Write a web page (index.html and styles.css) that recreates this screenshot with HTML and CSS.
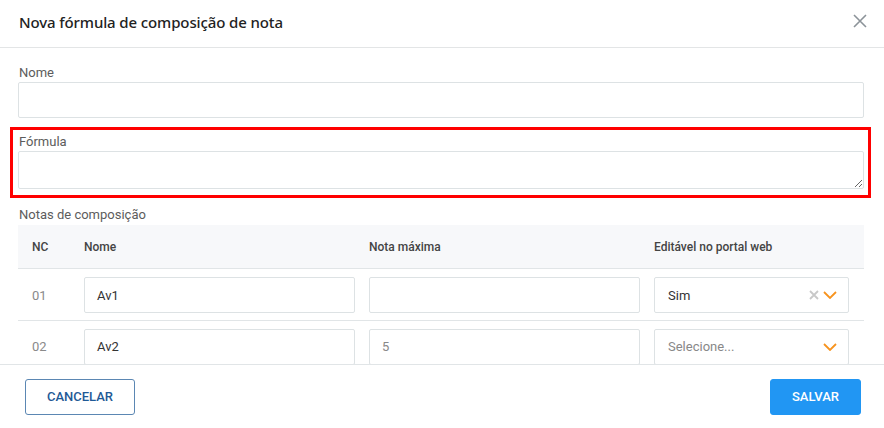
FILE: index.html
```html
<!DOCTYPE html>
<html lang="pt-BR">
<head>
<meta charset="utf-8">
<title>Nova fórmula de composição de nota</title>
<link rel="stylesheet" href="styles.css">
</head>
<body>
<div class="modal">
  <header class="modal-header">
    <h1 class="modal-title">Nova fórmula de composição de nota</h1>
    <button class="close-btn" type="button" aria-label="Fechar">
      <svg viewBox="0 0 14 14" width="14" height="14"><path d="M1 1 L13 13 M13 1 L1 13" stroke="#8c9399" stroke-width="1.6" fill="none"/></svg>
    </button>
  </header>
  <div class="modal-body">
    <div class="field">
      <label class="field-label">Nome</label>
      <input class="text-input" type="text">
    </div>
    <div class="field highlight">
      <label class="field-label">Fórmula</label>
      <textarea class="text-area"></textarea>
    </div>
    <div class="field">
      <label class="field-label">Notas de composição</label>
      <div class="grid-table">
        <div class="grid-row head">
          <div class="cell">NC</div>
          <div class="cell">Nome</div>
          <div class="cell">Nota máxima</div>
          <div class="cell last">Editável no portal web</div>
        </div>
        <div class="grid-row">
          <div class="cell nc">01</div>
          <div class="cell"><div class="box">Av1</div></div>
          <div class="cell"><div class="box"></div></div>
          <div class="cell last">
            <div class="box select">
              <span class="sel-value">Sim</span>
              <svg class="clear-ico" viewBox="0 0 10 10" width="10" height="10"><path d="M1 1 L9 9 M9 1 L1 9" stroke="#c8c8c8" stroke-width="1.8" fill="none"/></svg>
              <svg class="chev" viewBox="0 0 14 8" width="14" height="8"><path d="M1 1 L7 7 L13 1" stroke="#f7931e" stroke-width="1.8" fill="none"/></svg>
            </div>
          </div>
        </div>
        <div class="grid-row">
          <div class="cell nc">02</div>
          <div class="cell"><div class="box">Av2</div></div>
          <div class="cell"><div class="box muted">5</div></div>
          <div class="cell last">
            <div class="box select">
              <span class="sel-value muted">Selecione...</span>
              <svg class="chev" viewBox="0 0 14 8" width="14" height="8"><path d="M1 1 L7 7 L13 1" stroke="#f7931e" stroke-width="1.8" fill="none"/></svg>
            </div>
          </div>
        </div>
      </div>
    </div>
  </div>
  <footer class="modal-footer">
    <button class="btn btn-outline" type="button">CANCELAR</button>
    <button class="btn btn-primary" type="button">SALVAR</button>
  </footer>
</div>
</body>
</html>
```
FILE: styles.css
```css
* { box-sizing: border-box; }
html, body { margin: 0; padding: 0; background: #fff; }
body { font-family: Roboto, "Liberation Sans", sans-serif; color: #333; }

.modal { width: 884px; height: 428px; display: flex; flex-direction: column; overflow: hidden; }

.modal-header {
  height: 48px;
  border-bottom: 1px solid #e3e5e6;
  display: flex;
  align-items: center;
  justify-content: space-between;
  padding: 0 17px 0 19px;
  flex: none;
}
.modal-title {
  margin: 0;
  font-family: "Noto Sans", sans-serif;
  font-weight: 500;
  font-size: 15px;
  letter-spacing: -0.12px;
  color: #222;
  line-height: 20px;
  padding-bottom: 4px;
}
.close-btn {
  border: 0; background: none; padding: 0; width: 14px; height: 14px;
  display: flex; margin-bottom: 5px;
}

.modal-body {
  height: 316px;
  flex: none;
  overflow: hidden;
  padding: 17px 20px 0 18px;
}

.field { display: flex; flex-direction: column; margin-bottom: 9px; }
.field-label {
  font-size: 13px;
  line-height: 15px;
  color: #5c5c5c;
  margin-bottom: 2px;
  padding-left: 1px;
}
.text-input {
  height: 36px;
  border: 1px solid #dde2e4;
  border-radius: 2px;
  font: inherit;
  outline: none;
}
.text-area {
  height: 38px;
  border: 1px solid #dde2e4;
  border-radius: 2px;
  font: inherit;
  resize: both;
  outline: none;
}
.highlight {
  border: 3px solid #ff0000;
  padding: 4px 4px 6px 5px;
  margin: 0 -7px 9px -8px;
}

.grid-table { margin-top: 1px; }
.grid-row {
  display: grid;
  grid-template-columns: 52px 285px 285px 1fr;
  align-items: center;
  border-bottom: 1px solid #e1e5e7;
  height: 52px;
  padding: 8px 0 7px;
}
.grid-row + .grid-row + .grid-row { padding-top: 7px; }
.grid-row.head {
  background: #f7f8fa;
  height: 44px;
  padding: 0;
  font-size: 12px;
  font-weight: 500;
  color: #444;
}
.cell { padding-left: 14px; font-size: 13px; }
.grid-row.head .cell { font-size: 12px; }
.cell.last { padding-right: 15px; }
.cell.nc { color: #8a8a8a; }

.box {
  height: 36px;
  border: 1px solid #dde2e4;
  border-radius: 2px;
  display: flex;
  align-items: center;
  padding: 0 12px;
  color: #333;
  font-size: 13px;
}
.box.muted, .sel-value.muted { color: #888; }
.select { padding: 0 11px 0 13px; }
.sel-value { flex: 1; }
.clear-ico { margin-right: 4px; }

.modal-footer {
  flex: 1;
  border-top: 1px solid #e1e5e7;
  display: flex;
  justify-content: space-between;
  align-items: flex-start;
  padding: 14px 23px 0 25px;
}
.btn {
  height: 36px;
  padding: 0;
  border-radius: 3px;
  font-family: Roboto, sans-serif;
  font-weight: 500;
  font-size: 13px;
  line-height: 34px;
  text-align: center;
  cursor: pointer;
}
.btn-outline {
  width: 110px;
  background: #fff;
  border: 1px solid #5b87b3;
  color: #1f5a96;
}
.btn-primary {
  width: 91px;
  background: #2196f3;
  border: 1px solid #2196f3;
  color: #fff;
}
```
